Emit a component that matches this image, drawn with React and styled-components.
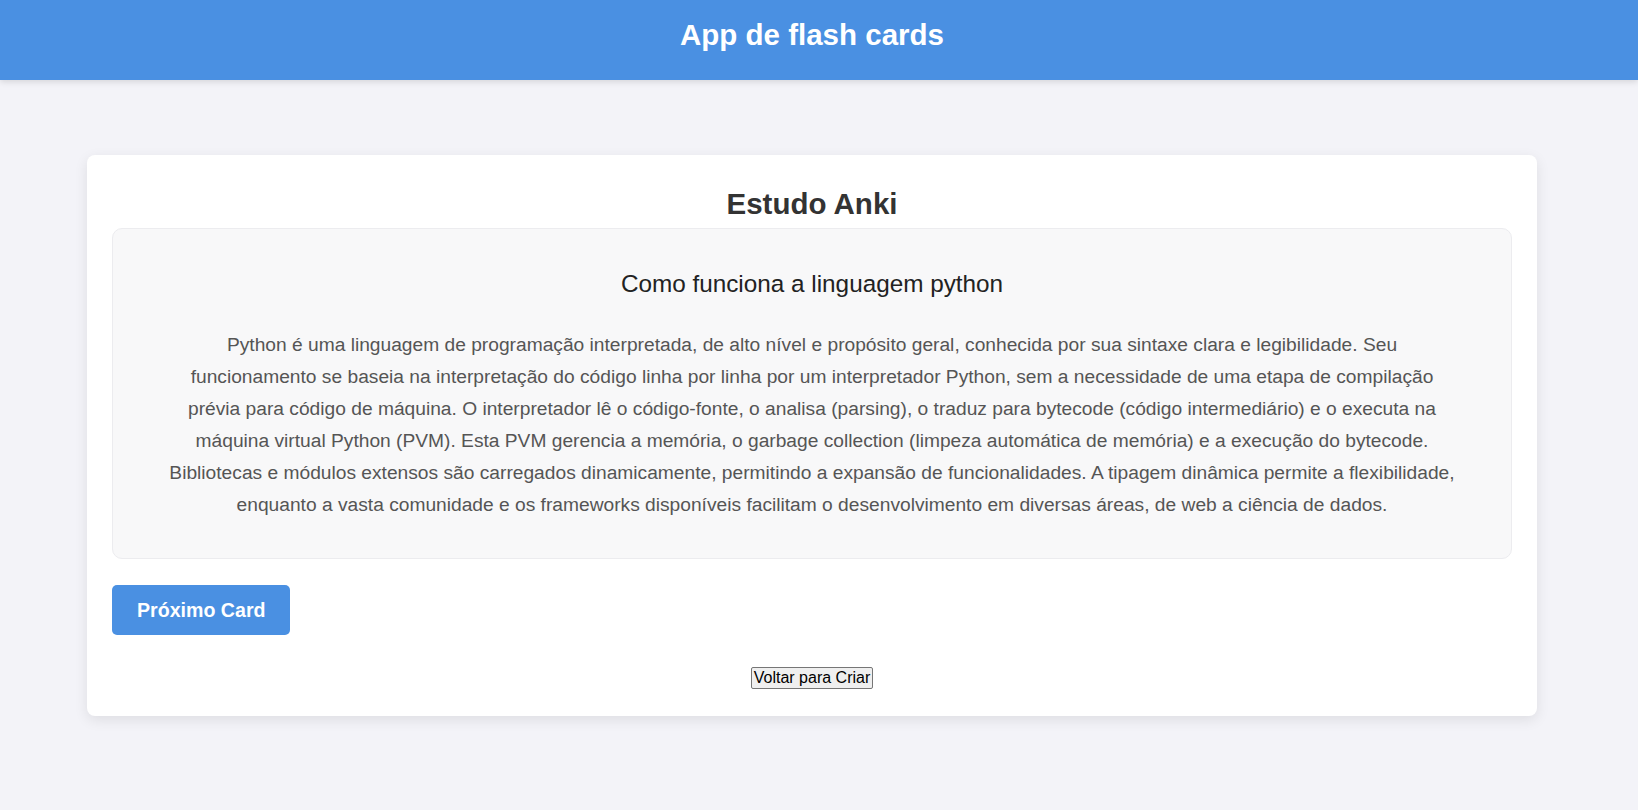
import { Fragment } from 'react';
import styled, { createGlobalStyle } from 'styled-components';

const GlobalStyle = createGlobalStyle`
  html, body {
    margin: 0;
    padding: 0;
    background-color: #f3f3f8;
    font-family: 'Liberation Sans', Arial, sans-serif;
  }
  * {
    box-sizing: border-box;
  }
`;

const Header = styled.header`
  height: 80px;
  padding: 18px 14px 0 0;
  background-color: #4a90e2;
  box-shadow: 0 2px 6px rgba(0, 0, 0, 0.12);
  text-align: center;

  h1 {
    margin: 0;
    color: #ffffff;
    font-size: 29.5px;
    font-weight: 700;
  }
`;

const Main = styled.main`
  padding: 75px 14px 40px 0;
`;

const Card = styled.section`
  width: 1450px;
  margin: 0 auto;
  padding: 25px 25px 27px;
  background-color: #ffffff;
  border-radius: 8px;
  box-shadow: 0 4px 14px rgba(0, 0, 0, 0.09);

  h2 {
    margin: 7px 0 7px;
    color: #333333;
    font-size: 29.5px;
    font-weight: 700;
    text-align: center;
  }
`;

const FlashCard = styled.div`
  padding: 41px 30px 37px;
  background-color: #f8f8f9;
  border: 1px solid #ececef;
  border-radius: 10px;
  text-align: center;

  h3 {
    margin: 0 0 31px;
    color: #222222;
    font-size: 24.3px;
    font-weight: 400;
  }

  p {
    margin: 0;
    color: #555555;
    font-size: 19.2px;
    line-height: 32px;
    white-space: nowrap;
  }
`;

const ActionRow = styled.div`
  display: flex;
  justify-content: ${(props) => props.$align || 'flex-start'};
  margin-top: ${(props) => props.$gap || 0}px;
`;

const PrimaryButton = styled.button`
  height: 50px;
  padding: 0 25px;
  border: none;
  border-radius: 5px;
  background-color: #4a90e2;
  color: #ffffff;
  font-family: inherit;
  font-size: 19.6px;
  font-weight: 700;
  cursor: pointer;
`;

const PlainButton = styled.button`
  padding: 1px 2px;
  border: 1px solid #767676;
  border-radius: 2px;
  background-color: #efefef;
  color: #000000;
  font-family: inherit;
  font-size: 16px;
  line-height: normal;
`;

const answerLines = [
  'Python é uma linguagem de programação interpretada, de alto nível e propósito geral, conhecida por sua sintaxe clara e legibilidade. Seu',
  'funcionamento se baseia na interpretação do código linha por linha por um interpretador Python, sem a necessidade de uma etapa de compilação',
  'prévia para código de máquina. O interpretador lê o código-fonte, o analisa (parsing), o traduz para bytecode (código intermediário) e o executa na',
  'máquina virtual Python (PVM). Esta PVM gerencia a memória, o garbage collection (limpeza automática de memória) e a execução do bytecode.',
  'Bibliotecas e módulos extensos são carregados dinamicamente, permitindo a expansão de funcionalidades. A tipagem dinâmica permite a flexibilidade,',
  'enquanto a vasta comunidade e os frameworks disponíveis facilitam o desenvolvimento em diversas áreas, de web a ciência de dados.',
];

const App = () => {
  return (
    <Fragment>
      <GlobalStyle />
      <Header>
        <h1>App de flash cards</h1>
      </Header>
      <Main>
        <Card>
          <h2>Estudo Anki</h2>
          <FlashCard>
            <h3>Como funciona a linguagem python</h3>
            <p>
              {answerLines.map((line, i) => (
                <Fragment key={i}>
                  {line}
                  {i < answerLines.length - 1 && <br />}
                </Fragment>
              ))}
            </p>
          </FlashCard>
          <ActionRow $gap={26}>
            <PrimaryButton>Próximo Card</PrimaryButton>
          </ActionRow>
          <ActionRow $align="center" $gap={32}>
            <PlainButton>Voltar para Criar</PlainButton>
          </ActionRow>
        </Card>
      </Main>
    </Fragment>
  );
};

export default App;
